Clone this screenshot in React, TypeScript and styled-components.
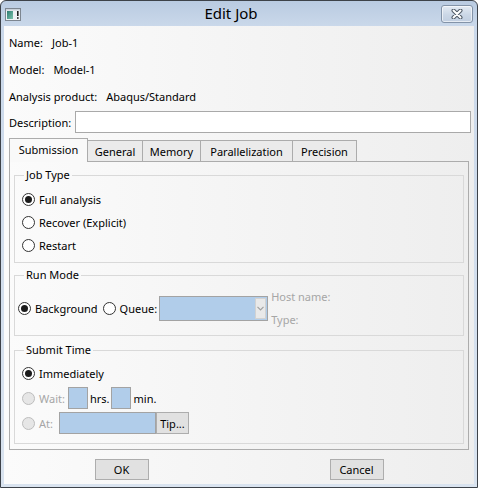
import React from "react";
import styled, { createGlobalStyle } from "styled-components";

const GlobalStyle = createGlobalStyle`
  html, body {
    margin: 0;
    padding: 0;
    background: #ffffff;
  }
  body {
    width: 478px;
    height: 488px;
    overflow: hidden;
    font-family: "Noto Sans", "DejaVu Sans", sans-serif;
    font-size: 11px;
    color: #000;
  }
`;

const Window = styled.div`
  box-sizing: border-box;
  width: 478px;
  height: 488px;
  display: flex;
  flex-direction: column;
  padding: 0 3px 3px;
  border: 1px solid #3d4249;
  border-radius: 6px 6px 0 0;
  background: linear-gradient(to bottom, #b9cbe1 0px, #cad8ea 25px, #d9e3ef 100%);
`;

const TitleBar = styled.div`
  height: 25px;
  display: flex;
  align-items: flex-start;
`;

const TitleIcon = styled.svg`
  margin: 7px 0 0 1px;
  flex: none;
`;

const Title = styled.div`
  flex: 1;
  text-align: center;
  font-size: 15px;
  line-height: 25px;
  color: #000;
`;

const CloseButton = styled.div`
  box-sizing: border-box;
  width: 32px;
  height: 18px;
  margin: 4px 1px 0 0;
  display: flex;
  align-items: center;
  justify-content: center;
  border: 1px solid #8393a8;
  border-radius: 3px;
  background: linear-gradient(to bottom, #e4ebf4, #cbd7e6 55%, #c0cee0);
  box-shadow: inset 0 0 0 1px rgba(255, 255, 255, 0.6);
`;

const Client = styled.div`
  flex: 1;
  display: flex;
  flex-direction: column;
  padding: 3px 5px 0;
  background: linear-gradient(to right, #fbfbfb, #eeeeee);
`;

const InfoRow = styled.div`
  height: 27px;
  display: flex;
  align-items: center;
  gap: 9px;
  white-space: nowrap;
  padding-bottom: 1px;
  box-sizing: border-box;
`;

const DescRow = styled.div`
  height: 24px;
  display: flex;
  align-items: center;
  gap: 4px;
  margin-right: -2px;
`;

const TextBox = styled.div`
  box-sizing: border-box;
  flex: 1;
  height: 22px;
  background: #fff;
  border: 1px solid #a9a9a9;
`;

const TabStrip = styled.div`
  margin-top: 4px;
  height: 23px;
  display: flex;
  align-items: flex-end;
`;

const Tab = styled.div<{ $active?: boolean; $w: number }>`
  box-sizing: border-box;
  position: relative;
  width: ${(p) => p.$w}px;
  height: ${(p) => (p.$active ? 24 : 21)}px;
  margin-bottom: ${(p) => (p.$active ? -1 : 0)}px;
  margin-left: -1px;
  z-index: ${(p) => (p.$active ? 2 : 1)};
  display: flex;
  align-items: center;
  justify-content: center;
  padding-bottom: ${(p) => (p.$active ? 2 : 0)}px;
  border: 1px solid #acacac;
  border-bottom: none;
  background: ${(p) => (p.$active ? "#f9f9f9" : "#ebebeb")};
  white-space: nowrap;
  &:first-child {
    margin-left: 0;
  }
`;

const Panel = styled.div`
  display: flex;
  flex-direction: column;
  padding: 6px 4px 5px;
  border: 1px solid #acacac;
`;

const Group = styled.fieldset<{ $mt: number }>`
  margin: ${(p) => p.$mt}px 0 0;
  padding: 0;
  min-width: 0;
  border: 1px solid #d9d9d9;
`;

const Legend = styled.legend`
  margin-left: 9px;
  padding: 0 2px;
  line-height: 14px;
  font-size: 11px;
`;

const GroupBody = styled.div<{ $pad: string; $gap?: number }>`
  display: flex;
  flex-direction: column;
  gap: ${(p) => p.$gap ?? 0}px;
  padding: ${(p) => p.$pad};
`;

const Row = styled.div<{ $h: number }>`
  height: ${(p) => p.$h}px;
  display: flex;
  align-items: center;
  white-space: nowrap;
`;

const RadioLabel = styled.label<{ $disabled?: boolean; $ml?: number }>`
  display: inline-flex;
  align-items: center;
  gap: 4px;
  margin-left: ${(p) => p.$ml ?? 0}px;
  color: ${(p) => (p.$disabled ? "#a6a6a6" : "#000")};
`;

const RadioCircle = styled.span<{ $checked?: boolean; $disabled?: boolean }>`
  box-sizing: border-box;
  width: 13px;
  height: 13px;
  flex: none;
  border-radius: 50%;
  display: flex;
  align-items: center;
  justify-content: center;
  border: 1px solid ${(p) => (p.$disabled ? "#bdbdbd" : "#333333")};
  background: ${(p) => (p.$disabled ? "#e6e6e6" : "#ffffff")};
  &::after {
    content: "";
    display: ${(p) => (p.$checked ? "block" : "none")};
    width: 7px;
    height: 7px;
    border-radius: 50%;
    background: #1b1b1b;
  }
`;

const Combo = styled.div`
  box-sizing: border-box;
  width: 109px;
  height: 25px;
  margin-left: 2px;
  display: flex;
  justify-content: flex-end;
  align-items: stretch;
  padding: 1px;
  border: 1px solid #a3a3a3;
  background: #b1cdea;
`;

const DropButton = styled.div`
  box-sizing: border-box;
  width: 11px;
  display: flex;
  align-items: center;
  justify-content: center;
  border: 1px solid #d2d2d2;
  background: #e9e9e9;
`;

const HostColumn = styled.div`
  display: flex;
  flex-direction: column;
  margin-left: 3px;
  color: #a6a6a6;
  line-height: 23px;
`;

const Field = styled.div<{ $w: number; $ml?: number }>`
  box-sizing: border-box;
  width: ${(p) => p.$w}px;
  height: 22px;
  margin-left: ${(p) => p.$ml ?? 0}px;
  border: 1px solid #a3a3a3;
  background: #b1cdea;
`;

const Unit = styled.span<{ $ml: number }>`
  margin-left: ${(p) => p.$ml}px;
`;

const Button = styled.div<{ $w: number; $h: number }>`
  box-sizing: border-box;
  width: ${(p) => p.$w}px;
  height: ${(p) => p.$h}px;
  display: flex;
  align-items: center;
  justify-content: center;
  border: 1px solid #adadad;
  background: #e1e1e1;
  color: #000;
`;

const ButtonRow = styled.div`
  display: grid;
  grid-template-columns: 1fr 1fr;
  justify-items: center;
  margin: 0 -5px;
  padding-top: 9px;
`;

const tabs = [
  { label: "Submission", w: 79 },
  { label: "General", w: 56 },
  { label: "Memory", w: 59 },
  { label: "Parallelization", w: 93 },
  { label: "Precision", w: 65 },
];

const Radio = ({
  label,
  checked,
  disabled,
  ml,
}: {
  label: string;
  checked?: boolean;
  disabled?: boolean;
  ml?: number;
}) => (
  <RadioLabel $disabled={disabled} $ml={ml}>
    <RadioCircle $checked={checked} $disabled={disabled} />
    {label}
  </RadioLabel>
);

const App = () => (
  <>
    <GlobalStyle />
    <Window>
      <TitleBar>
        <TitleIcon width="16" height="13" viewBox="0 0 16 13">
          <defs>
            <linearGradient id="tg" x1="0" y1="0" x2="1" y2="1">
              <stop offset="0" stopColor="#2c7a70" />
              <stop offset="1" stopColor="#7cc4ad" />
            </linearGradient>
          </defs>
          <rect x="0.5" y="0.5" width="15" height="12" fill="#eef1f4" stroke="#7d8690" />
          <rect x="1" y="1" width="14" height="1.5" fill="#c9d1da" />
          <rect x="2" y="3" width="6" height="8" fill="url(#tg)" />
          <rect x="12" y="3" width="1.6" height="5" fill="#1e1e1e" />
          <rect x="12" y="9.2" width="1.6" height="1.6" fill="#1e1e1e" />
        </TitleIcon>
        <Title>Edit Job</Title>
        <CloseButton>
          <svg width="12" height="10" viewBox="0 0 12 10">
            <path d="M2.5 1.5 L9.5 8.5 M9.5 1.5 L2.5 8.5" stroke="#4f5a66" strokeWidth="4" strokeLinecap="round" />
            <path d="M2.5 1.5 L9.5 8.5 M9.5 1.5 L2.5 8.5" stroke="#ffffff" strokeWidth="2" strokeLinecap="round" />
          </svg>
        </CloseButton>
      </TitleBar>
      <Client>
        <InfoRow>
          <span>Name:</span>
          <span>Job-1</span>
        </InfoRow>
        <InfoRow>
          <span>Model:</span>
          <span>Model-1</span>
        </InfoRow>
        <InfoRow>
          <span>Analysis product:</span>
          <span>Abaqus/Standard</span>
        </InfoRow>
        <DescRow>
          <span>Description:</span>
          <TextBox />
        </DescRow>
        <TabStrip>
          {tabs.map((t, i) => (
            <Tab key={t.label} $active={i === 0} $w={t.w}>
              {t.label}
            </Tab>
          ))}
        </TabStrip>
        <Panel>
          <Group $mt={0}>
            <Legend>Job Type</Legend>
            <GroupBody $pad="6px 0 5px 7px">
              <Row $h={23}>
                <Radio label="Full analysis" checked />
              </Row>
              <Row $h={23}>
                <Radio label="Recover (Explicit)" />
              </Row>
              <Row $h={23}>
                <Radio label="Restart" />
              </Row>
            </GroupBody>
          </Group>
          <Group $mt={5}>
            <Legend>Run Mode</Legend>
            <GroupBody $pad="3px 0 4px 3px">
              <Row $h={46}>
                <Radio label="Background" checked />
                <Radio label="Queue:" ml={5} />
                <Combo>
                  <DropButton>
                    <svg width="7" height="5" viewBox="0 0 7 5">
                      <path d="M0.5 0.8 L3.5 3.8 L6.5 0.8" fill="none" stroke="#a0a0a0" strokeWidth="1.2" />
                    </svg>
                  </DropButton>
                </Combo>
                <HostColumn>
                  <span>Host name:</span>
                  <span>Type:</span>
                </HostColumn>
              </Row>
            </GroupBody>
          </Group>
          <Group $mt={7}>
            <Legend>Submit Time</Legend>
            <GroupBody $pad="4px 0 8px 7px" $gap={1}>
              <Row $h={24}>
                <Radio label="Immediately" checked />
              </Row>
              <Row $h={24}>
                <Radio label="Wait:" disabled />
                <Field $w={20} $ml={3} />
                <Unit $ml={2}>hrs.</Unit>
                <Field $w={20} $ml={1} />
                <Unit $ml={3}>min.</Unit>
              </Row>
              <Row $h={24}>
                <Radio label="At:" disabled />
                <Field $w={97} $ml={6} />
                <Button $w={33} $h={22}>
                  Tip...
                </Button>
              </Row>
            </GroupBody>
          </Group>
        </Panel>
        <ButtonRow>
          <Button $w={54} $h={21}>
            OK
          </Button>
          <Button $w={54} $h={21}>
            Cancel
          </Button>
        </ButtonRow>
      </Client>
    </Window>
  </>
);

export default App;
